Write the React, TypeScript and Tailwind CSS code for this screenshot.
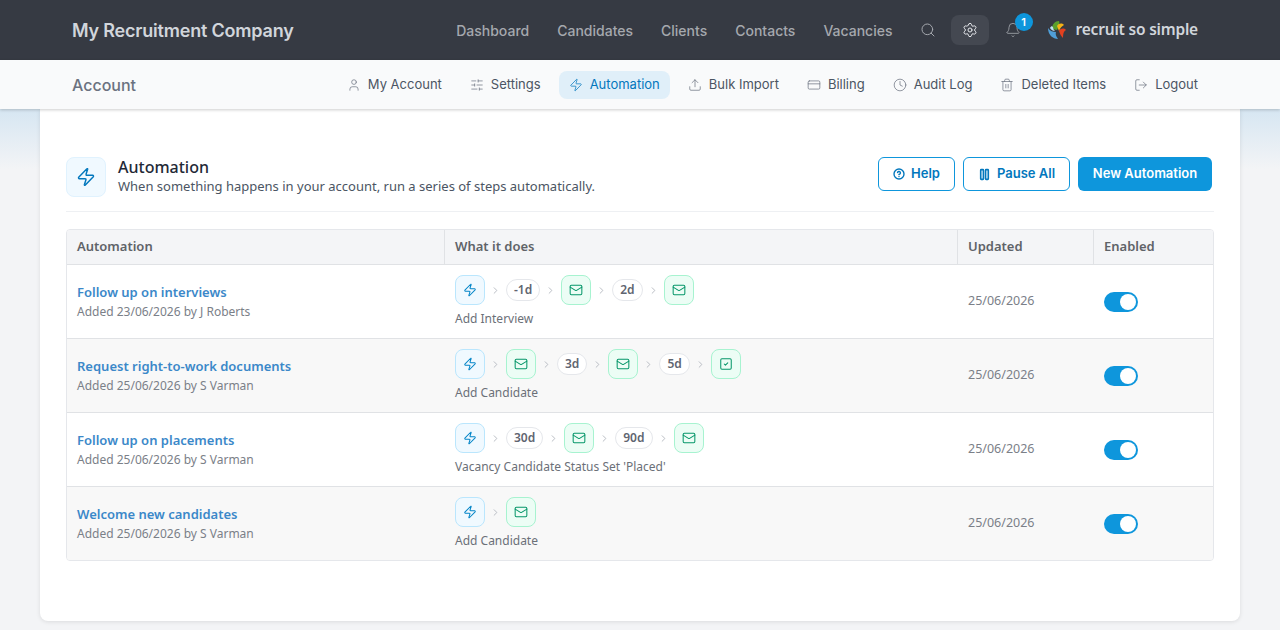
import React from "react";
import { Search, Settings, Bell, User, SlidersHorizontal, Zap, Upload, CreditCard, Clock, Trash2, LogOut, CircleHelp, Pause, Mail, SquareCheck, ChevronRight } from "lucide-react";

type Step = { k: "mail" | "task" } | { k: "wait"; t: string };
const rows: { title: string; by: string; steps: Step[]; trigger: string }[] = [
  { title: "Follow up on interviews", by: "Added 23/06/2026 by J Roberts", trigger: "Add Interview", steps: [{ k: "wait", t: "-1d" }, { k: "mail" }, { k: "wait", t: "2d" }, { k: "mail" }] },
  { title: "Request right-to-work documents", by: "Added 25/06/2026 by S Varman", trigger: "Add Candidate", steps: [{ k: "mail" }, { k: "wait", t: "3d" }, { k: "mail" }, { k: "wait", t: "5d" }, { k: "task" }] },
  { title: "Follow up on placements", by: "Added 25/06/2026 by S Varman", trigger: "Vacancy Candidate Status Set 'Placed'", steps: [{ k: "wait", t: "30d" }, { k: "mail" }, { k: "wait", t: "90d" }, { k: "mail" }] },
  { title: "Welcome new candidates", by: "Added 25/06/2026 by S Varman", trigger: "Add Candidate", steps: [{ k: "mail" }] },
];

const sub = [
  { t: "My Account", I: User },
  { t: "Settings", I: SlidersHorizontal },
  { t: "Automation", I: Zap, active: true },
  { t: "Bulk Import", I: Upload },
  { t: "Billing", I: CreditCard },
  { t: "Audit Log", I: Clock },
  { t: "Deleted Items", I: Trash2 },
  { t: "Logout", I: LogOut },
];

function Chevron() {
  return <ChevronRight size={11} strokeWidth={2} className="mx-[5px] text-[#b4b8bf]" />;
}

function StepBox({ kind }: { kind: "trigger" | "mail" | "task" }) {
  if (kind === "trigger")
    return (
      <span className="flex h-[30px] w-[30px] items-center justify-center rounded-lg border border-[#bae6fd] bg-[#f0f9ff] text-[#0284c7]">
        <Zap size={14} strokeWidth={1.75} />
      </span>
    );
  return (
    <span className="flex h-[30px] w-[30px] items-center justify-center rounded-lg border border-[#a7f3d0] bg-[#ecfdf5] text-[#059669]">
      {kind === "mail" ? <Mail size={14} strokeWidth={1.75} /> : <SquareCheck size={14} strokeWidth={1.75} />}
    </span>
  );
}

function Logo() {
  return (
    <svg width="20" height="20" viewBox="0 0 20 20" className="mr-[9px]">
      <path d="M5 9 C5 4 8 1 12 1 C13 3 12 7 10 10 Z" fill="#5aa02c" />
      <path d="M10 6 C12 3 15 3 17 5 C15 6 13 8 12 11 Z" fill="#f5b316" />
      <path d="M12 11 C14 8 17 8 19 10 C17 11 16 13 16 18 C14 16 13 14 12 11 Z" fill="#e2401f" />
      <path d="M1 8 C3 11 6 12 9 12 C8 15 10 17 11 19 C6 19 1 15 1 8 Z" fill="#4f9ed8" />
      <path d="M3 8 C4 6 5 6 6 7 C6 9 7 10 8 11 C6 11 4 10 3 8 Z" fill="#bfe0f2" />
    </svg>
  );
}

export default function App() {
  return (
    <div className="h-[630px] overflow-hidden bg-[#f3f4f6] font-['Inter',sans-serif]">
      <header className="flex h-[60px] items-center bg-[#363a43] pl-[72px] pr-[82px]">
        <div className="text-[18px] font-semibold tracking-[-0.2px] text-[#d1d5db]">My Recruitment Company</div>
        <nav className="ml-auto flex items-center gap-[28px] text-[14px] font-medium text-[#a5a8ae]">
          <span>Dashboard</span>
          <span>Candidates</span>
          <span>Clients</span>
          <span>Contacts</span>
          <span>Vacancies</span>
        </nav>
        <Search size={16} strokeWidth={1.5} className="ml-[27px] text-[#a5a8ae]" />
        <span className="ml-[15px] flex h-[30px] w-[38px] items-center justify-center rounded-lg bg-[#444851] text-[#e5e7eb]">
          <Settings size={16} strokeWidth={1.5} />
        </span>
        <span className="relative ml-[16px] flex h-[30px] w-[16px] items-center justify-center text-[#a5a8ae]">
          <Bell size={16} strokeWidth={1.25} />
          <span className="absolute left-[10px] top-[-2px] flex h-[18px] w-[18px] items-center justify-center rounded-full bg-[#0e96dc] text-[11px] font-semibold text-white">1</span>
        </span>
        <span className="ml-[26px] flex items-center">
          <Logo />
          <span className="font-['Noto_Sans',sans-serif] text-[15.5px] font-semibold tracking-[-0.2px] text-[#d1d5db]">recruit so simple</span>
        </span>
      </header>

      <div className="relative z-10 flex h-[49px] items-center bg-[#f9fafb] pl-[72px] pr-[72px] shadow-[0_1px_3px_rgba(0,0,0,0.2)]">
        <div className="text-[16px] font-medium text-[#6b7280]">Account</div>
        <nav className="ml-auto flex items-center gap-[8px] text-[13px] text-[#4b5563]">
          {sub.map(({ t, I, active }) => (
            <span key={t} className={active ? "flex h-[28px] items-center gap-[7px] rounded-lg bg-[#e0eff9] px-[10px] text-[#0277bd]" : "flex h-[28px] items-center gap-[7px] px-[10px]"}>
              <I size={14} strokeWidth={1.25} className={active ? "text-[#0277bd]" : "text-[#6b7280]"} />
              {t}
            </span>
          ))}
        </nav>
      </div>

      <div className="h-[521px] bg-[linear-gradient(#d6e6f2,#f3f4f6_60px)] px-[40px]">
        <main className="h-[512px] rounded-b-lg bg-white px-[26px] pt-[48px] shadow-[0_1px_4px_rgba(0,0,0,0.1)] font-['Noto_Sans',sans-serif]">
          <div className="flex h-[55px] items-start border-b border-[#eef0f3] pr-[2px]">
            <span className="mt-[0px] flex h-[40px] w-[40px] items-center justify-center rounded-lg border border-[#e0f2fe] bg-[#f0f9ff] text-[#0277bd]">
              <Zap size={20} strokeWidth={1.75} />
            </span>
            <div className="ml-[12px]">
              <div className="text-[16px] font-medium leading-[20px] text-[#1f2937]">Automation</div>
              <div className="text-[13px] leading-[19px] text-[#4b5563]">When something happens in your account, run a series of steps automatically.</div>
            </div>
            <div className="ml-auto flex gap-[8px] font-['Inter',sans-serif] text-[13px] font-semibold">
              <button className="flex h-[34px] w-[77px] items-center justify-center gap-[6px] rounded-md border border-[#0e96dc] bg-white text-[#0277bd]">
                <CircleHelp size={12} strokeWidth={2.75} />Help
              </button>
              <button className="flex h-[34px] w-[107px] items-center justify-center gap-[6px] rounded-md border border-[#0e96dc] bg-white text-[#0277bd]">
                <Pause size={13} strokeWidth={3} />Pause All
              </button>
              <button className="flex h-[34px] w-[134px] items-center justify-center rounded-md bg-[#0e96dc] text-white">New Automation</button>
            </div>
          </div>

          <div className="mt-[17px] overflow-hidden rounded-[4px] border border-[#e5e7eb] text-[12px] text-[#7b8088]">
            <div className="grid h-[35px] grid-cols-[378px_513px_136px_1fr] items-stretch border-b border-[#e0e2e5] bg-[#f4f5f7] text-[13px] font-semibold text-[#5f6368]">
              <div className="flex items-center border-r border-[#e0e2e5] px-[10px]">Automation</div>
              <div className="flex items-center border-r border-[#e0e2e5] px-[10px]">What it does</div>
              <div className="flex items-center border-r border-[#e0e2e5] px-[10px]">Updated</div>
              <div className="flex items-center px-[10px]">Enabled</div>
            </div>
            {rows.map((r, i) => (
              <div key={r.title} className={(i % 2 ? "bg-[#f8f8f8] " : "bg-white ") + (i < 3 ? "h-[74px] border-b border-[#e0e2e5] " : "h-[73px] ") + "grid grid-cols-[378px_513px_136px_1fr]"}>
                <div className="flex flex-col justify-center px-[10px]">
                  <div className="text-[13px] font-semibold leading-[20px] text-[#3b88c9]">{r.title}</div>
                  <div className="text-[12px] leading-[20px]">{r.by}</div>
                </div>
                <div className="flex flex-col justify-center px-[10px]">
                  <div className="flex items-center">
                    <StepBox kind="trigger" />
                    {r.steps.map((s, j) => (
                      <React.Fragment key={j}>
                        <Chevron />
                        {s.k === "wait" ? (
                          <span className="flex h-[22px] items-center rounded-full border border-[#e5e7eb] bg-white px-[7px] text-[12px] font-semibold text-[#5f6570]">{s.t}</span>
                        ) : (
                          <StepBox kind={s.k} />
                        )}
                      </React.Fragment>
                    ))}
                  </div>
                  <div className="mt-[5px] text-[12px] leading-[18px] text-[#6b7078]">{r.trigger}</div>
                </div>
                <div className="flex items-center px-[10px] text-[12.5px]">25/06/2026</div>
                <div className="flex items-center px-[10px]">
                  <span className="flex h-[20px] w-[34px] items-center justify-end rounded-full bg-[#0e96dc] pr-[2px]">
                    <span className="h-[16px] w-[16px] rounded-full bg-white" />
                  </span>
                </div>
              </div>
            ))}
          </div>
        </main>
      </div>
    </div>
  );
}
